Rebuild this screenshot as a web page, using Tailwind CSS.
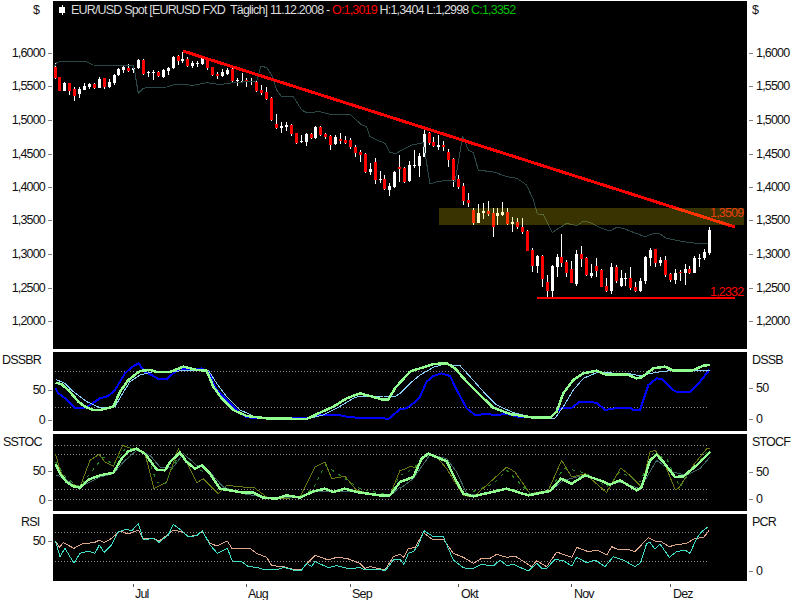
<!DOCTYPE html>
<html lang="de">
<head>
<meta charset="UTF-8">
<title>EUR/USD Spot</title>
<script src="https://cdn.jsdelivr.net/npm/@tailwindcss/browser@4"></script>
</head>
<body class="bg-white w-[800px] h-[600px] overflow-hidden text-[12.5px] leading-[14px] text-[#111] tracking-[-0.82px] font-['Liberation_Sans',Arial,sans-serif]">
<div class="flex flex-col pt-px">

  <!-- main chart -->
  <div class="flex h-[348px] mb-[3px]">
    <div class="relative w-[53px] shrink-0">
      <div class="absolute left-[33px] top-[2px]">$</div>
      <div class="absolute left-0 w-[52px] top-[45px] flex items-center justify-end gap-[3px]"><span>1,6000</span><i class="w-[4px] h-px bg-[#808080]"></i></div>
      <div class="absolute left-0 w-[52px] top-[78px] flex items-center justify-end gap-[3px]"><span>1,5500</span><i class="w-[4px] h-px bg-[#808080]"></i></div>
      <div class="absolute left-0 w-[52px] top-[112px] flex items-center justify-end gap-[3px]"><span>1,5000</span><i class="w-[4px] h-px bg-[#808080]"></i></div>
      <div class="absolute left-0 w-[52px] top-[146px] flex items-center justify-end gap-[3px]"><span>1,4500</span><i class="w-[4px] h-px bg-[#808080]"></i></div>
      <div class="absolute left-0 w-[52px] top-[179px] flex items-center justify-end gap-[3px]"><span>1,4000</span><i class="w-[4px] h-px bg-[#808080]"></i></div>
      <div class="absolute left-0 w-[52px] top-[212px] flex items-center justify-end gap-[3px]"><span>1,3500</span><i class="w-[4px] h-px bg-[#808080]"></i></div>
      <div class="absolute left-0 w-[52px] top-[246px] flex items-center justify-end gap-[3px]"><span>1,3000</span><i class="w-[4px] h-px bg-[#808080]"></i></div>
      <div class="absolute left-0 w-[52px] top-[280px] flex items-center justify-end gap-[3px]"><span>1,2500</span><i class="w-[4px] h-px bg-[#808080]"></i></div>
      <div class="absolute left-0 w-[52px] top-[313px] flex items-center justify-end gap-[3px]"><span>1,2000</span><i class="w-[4px] h-px bg-[#808080]"></i></div>
    </div>
    <div class="relative w-[694px] shrink-0 bg-black">
      <svg id="main" class="block" width="694" height="348" viewBox="53 1 694 348" shape-rendering="crispEdges"></svg>
      <div class="absolute left-[6px] top-[4px] w-[6px] h-[10px] flex justify-center">
        <i class="absolute w-px h-[10px] bg-white"></i>
        <i class="absolute top-[2px] w-[6px] h-[6px] bg-white"></i>
      </div>
      <div class="absolute left-[18px] top-[2px] whitespace-pre text-[#dcdcdc]">EUR/USD Spot [EURUSD FXD  Täglich] 11.12.2008 - <span class="text-[#ff0000]">O:1,3019</span> H:1,3404 L:1,2998 <span class="text-[#00c000]">C:1,3352</span></div>
      <div class="absolute left-[657px] top-[205px] text-[#e8400a]">1,3509</div>
      <div class="absolute left-[657px] top-[284px] text-[#ff0000]">1,2332</div>
    </div>
    <div class="relative w-[53px] shrink-0">
      <div class="absolute left-[5px] top-[2px]">$</div>
      <div class="absolute left-[2px] top-[45px] flex items-center gap-[3px]"><i class="w-[4px] h-px bg-[#808080]"></i><span>1,6000</span></div>
      <div class="absolute left-[2px] top-[78px] flex items-center gap-[3px]"><i class="w-[4px] h-px bg-[#808080]"></i><span>1,5500</span></div>
      <div class="absolute left-[2px] top-[112px] flex items-center gap-[3px]"><i class="w-[4px] h-px bg-[#808080]"></i><span>1,5000</span></div>
      <div class="absolute left-[2px] top-[146px] flex items-center gap-[3px]"><i class="w-[4px] h-px bg-[#808080]"></i><span>1,4500</span></div>
      <div class="absolute left-[2px] top-[179px] flex items-center gap-[3px]"><i class="w-[4px] h-px bg-[#808080]"></i><span>1,4000</span></div>
      <div class="absolute left-[2px] top-[212px] flex items-center gap-[3px]"><i class="w-[4px] h-px bg-[#808080]"></i><span>1,3500</span></div>
      <div class="absolute left-[2px] top-[246px] flex items-center gap-[3px]"><i class="w-[4px] h-px bg-[#808080]"></i><span>1,3000</span></div>
      <div class="absolute left-[2px] top-[280px] flex items-center gap-[3px]"><i class="w-[4px] h-px bg-[#808080]"></i><span>1,2500</span></div>
      <div class="absolute left-[2px] top-[313px] flex items-center gap-[3px]"><i class="w-[4px] h-px bg-[#808080]"></i><span>1,2000</span></div>
    </div>
  </div>

  <!-- DSSBR / DSSB -->
  <div class="flex h-[79px] mb-[3px]">
    <div class="relative w-[53px] shrink-0">
      <div class="absolute left-[2px] top-px">DSSBR</div>
      <div class="absolute left-0 w-[52px] top-[31px] flex items-center justify-end gap-[3px]"><span>50</span><i class="w-[4px] h-px bg-[#808080]"></i></div>
      <div class="absolute left-0 w-[52px] top-[61px] flex items-center justify-end gap-[3px]"><span>0</span><i class="w-[4px] h-px bg-[#808080]"></i></div>
    </div>
    <svg id="dss" class="block shrink-0 bg-black" width="694" height="79" viewBox="53 352 694 79" shape-rendering="crispEdges"></svg>
    <div class="relative w-[53px] shrink-0">
      <div class="absolute left-[5px] top-px">DSSB</div>
      <div class="absolute left-[2px] top-[29px] flex items-center gap-[3px]"><i class="w-[4px] h-px bg-[#808080]"></i><span>50</span></div>
      <div class="absolute left-[2px] top-[60px] flex items-center gap-[3px]"><i class="w-[4px] h-px bg-[#808080]"></i><span>0</span></div>
    </div>
  </div>

  <!-- SSTOC / STOCF -->
  <div class="flex h-[77px] mb-[3px]">
    <div class="relative w-[53px] shrink-0">
      <div class="absolute left-[3px] top-px">SSTOC</div>
      <div class="absolute left-0 w-[52px] top-[30px] flex items-center justify-end gap-[3px]"><span>50</span><i class="w-[4px] h-px bg-[#808080]"></i></div>
      <div class="absolute left-0 w-[52px] top-[59px] flex items-center justify-end gap-[3px]"><span>0</span><i class="w-[4px] h-px bg-[#808080]"></i></div>
    </div>
    <svg id="sto" class="block shrink-0 bg-black" width="694" height="77" viewBox="53 434 694 77" shape-rendering="crispEdges"></svg>
    <div class="relative w-[53px] shrink-0">
      <div class="absolute left-[5px] top-px">STOCF</div>
      <div class="absolute left-[2px] top-[31px] flex items-center gap-[3px]"><i class="w-[4px] h-px bg-[#808080]"></i><span>50</span></div>
      <div class="absolute left-[2px] top-[58px] flex items-center gap-[3px]"><i class="w-[4px] h-px bg-[#808080]"></i><span>0</span></div>
    </div>
  </div>

  <!-- RSI / PCR -->
  <div class="flex h-[67px]">
    <div class="relative w-[53px] shrink-0">
      <div class="absolute left-[21px] top-px">RSI</div>
      <div class="absolute left-0 w-[52px] top-[20px] flex items-center justify-end gap-[3px]"><span>50</span><i class="w-[4px] h-px bg-[#808080]"></i></div>
    </div>
    <svg id="rsi" class="block shrink-0 bg-black" width="694" height="67" viewBox="53 514 694 67" shape-rendering="crispEdges"></svg>
    <div class="relative w-[53px] shrink-0">
      <div class="absolute left-[5px] top-px">PCR</div>
      <div class="absolute left-[2px] top-[50px] flex items-center gap-[3px]"><i class="w-[4px] h-px bg-[#808080]"></i><span>0</span></div>
    </div>
  </div>

  <!-- month axis -->
  <div class="relative h-[19px]">
    <i class="absolute left-[133px] top-[3px] w-px h-[3px] bg-[#555]"></i><span class="absolute left-[135px] top-[6px]">Jul</span>
    <i class="absolute left-[246px] top-[3px] w-px h-[3px] bg-[#555]"></i><span class="absolute left-[248px] top-[6px]">Aug</span>
    <i class="absolute left-[350px] top-[3px] w-px h-[3px] bg-[#555]"></i><span class="absolute left-[352px] top-[6px]">Sep</span>
    <i class="absolute left-[458px] top-[3px] w-px h-[3px] bg-[#555]"></i><span class="absolute left-[461px] top-[6px]">Okt</span>
    <i class="absolute left-[571px] top-[3px] w-px h-[3px] bg-[#555]"></i><span class="absolute left-[574px] top-[6px]">Nov</span>
    <i class="absolute left-[670px] top-[3px] w-px h-[3px] bg-[#555]"></i><span class="absolute left-[673px] top-[6px]">Dez</span>
  </div>
</div>

<script>
// all series were read off at 3x, so they are stored in 3x units and divided here
function xy(ox, oy, arr) { return arr.map(function (p) { return (ox + p[0] / 3) + ',' + (oy + p[1] / 3); }).join(' '); }

function line(svg, pts, color, width, dash) {
  svg.insertAdjacentHTML('beforeend', '<polyline fill="none" points="' + pts + '" stroke="' + color + '" stroke-width="' + (width || 1) +
    '" stroke-linejoin="round"' + (dash ? ' stroke-dasharray="' + dash + '"' : '') + '/>');
}
function dots(svg, y) {
  svg.insertAdjacentHTML('beforeend', '<line x1="55" x2="708" y1="' + y + '" y2="' + y + '" stroke="#909090" stroke-dasharray="1 2"/>');
}
function rect(svg, x, y, w, h, color, extra) {
  svg.insertAdjacentHTML('beforeend', '<rect x="' + x + '" y="' + y + '" width="' + w + '" height="' + h + '" fill="' + color + '" ' + (extra || '') + '/>');
}

// x, wick top, wick bottom, body top, body bottom, red
var c1 = [[166,190,238,202,234,1],[179,230,272,232,272,1],[193,245,274,248,272,0],[208,248,285,250,272,1],[223,262,302,268,288,1],[238,260,295,268,282,0],[253,250,270,258,270,0],[268,250,268,253,260,0],[283,250,267,252,263,1],[298,230,265,238,263,0],[313,235,268,235,260,1],[328,238,265,246,262,0],[343,222,254,224,249,0],[356,205,228,208,226,0],[370,198,218,202,210,0],[385,193,217,203,213,1],[400,195,218,203,210,0],[415,178,207,180,205,0],[430,178,224,179,222,1],[445,212,232,216,219,0],[460,210,240,215,220,0],[475,212,232,215,228,1],[490,208,233,210,230,0],[505,200,225,205,213,0],[520,168,208,170,205,0],[535,165,195,167,183,1],[548,155,188,177,182,0],[563,170,202,178,198,1],[577,182,205,189,197,0],[592,183,200,188,191,0],[607,170,195,174,192,0],[622,172,210,176,205,1],[637,200,228,202,226,1],[652,216,236,222,228,1],[667,208,232,217,228,0],[682,205,225,209,222,0],[697,205,250,208,243,1],[712,235,258,241,244,0],[727,218,250,242,246,0],[740,235,262,240,246,1],[755,235,255,244,246,0],[770,240,275,245,273,1],[785,255,285,270,280,1],[800,262,300,275,298,1],[815,292,362,293,360,1],[830,342,388,372,384,1],[845,365,398,378,383,0],[860,366,392,375,380,0],[875,372,408,376,403,1],[890,398,432,400,428,1],[905,405,428,423,426,0],[920,400,438,402,426,0],[933,398,418,402,414,1],[947,378,416,380,414,0],[962,378,408,380,404,1],[977,398,418,402,410,1],[992,406,450,408,435,1],[1007,405,436,410,433,0],[1022,400,432,418,424,1],[1037,408,432,420,430,1],[1052,415,446,420,442,1],[1067,436,470,440,458,1],[1082,450,485,456,464,1],[1097,460,520,462,516,1],[1111,490,525,506,516,0],[1125,475,552,486,540,1],[1140,512,550,538,540,0],[1153,525,570,538,568,1],[1168,550,588,557,570,0],[1183,512,565,515,562,0],[1198,465,545,502,506,1]];
var c2 = [[13,500,548,505,545,1],[28,483,546,495,543,0],[43,450,505,496,498,0],[58,460,530,468,498,0],[73,388,472,402,470,0],[88,395,436,398,428,1],[100,410,440,426,438,1],[115,405,450,436,440,0],[130,422,452,436,440,1],[145,447,500,456,480,1],[160,475,560,477,540,1],[175,525,566,538,560,1]];
var c3 = [[190,10,75,17,62,1],[205,40,82,60,68,1],[220,85,135,90,128,1],[235,72,130,98,128,0],[250,68,118,93,98,0],[265,62,107,93,103,1],[280,85,170,98,142,1],[293,85,135,100,108,0],[308,66,108,96,104,0],[322,85,135,96,132,1],[337,112,155,127,131,0],[352,115,148,126,142,1],[367,115,162,141,155,1],[382,150,214,152,212,1],[397,205,276,210,258,1],[412,225,278,228,258,0],[427,225,320,228,298,1],[442,284,350,306,332,1],[457,255,350,257,332,0],[472,222,290,230,260,0],[485,162,262,232,248,1],[499,240,290,245,278,1],[514,242,310,268,308,1],[529,210,318,222,312,0],[544,198,262,222,236,1],[559,232,288,234,286,1],[574,252,295,280,288,0],[589,235,290,258,272,1],[604,268,322,270,320,1],[619,295,336,318,332,1],[634,250,342,262,332,0],[649,256,308,262,302,1],[664,270,320,295,318,0],[676,280,318,294,296,0],[691,260,330,294,324,1],[706,305,336,322,332,1],[721,295,336,303,332,0],[736,228,312,230,302,0],[751,205,258,210,234,0],[766,206,260,208,248,1],[781,230,258,240,248,0],[796,228,290,240,285,1],[811,278,305,282,300,1],[826,268,312,278,300,0],[841,270,304,276,280,1],[856,252,315,267,280,0],[868,258,282,267,278,1],[883,228,280,233,278,0],[898,222,262,234,237,0],[913,207,240,215,235,0],[928,142,225,150,220,0]];

var main = document.getElementById('main');
function candles(list, ox, oy) {
  list.forEach(function (c) {
    var x = Math.floor(ox + c[0] / 3), hi = oy + c[1] / 3, lo = oy + c[2] / 3, top = oy + c[3] / 3, bot = oy + c[4] / 3;
    rect(main, x, hi, 1, lo - hi, '#ffffff');
    rect(main, x - 1, top, 3, Math.max(bot - top, 1), c[5] ? '#ff0000' : '#ffffff');
  });
}
candles(c1, 0, 0); candles(c2, 400, 0); candles(c3, 400, 180);

line(main, xy(0, 0, [[163,200],[170,188],[185,184],[258,184],[280,195],[400,197],[405,220],[415,280],[430,265],[450,262],[500,261],[530,252],[580,256],[620,248],[660,254],[700,248],[770,243],[783,198],[800,203],[815,225],[830,270],[845,290],[880,290],[905,330],[920,338],[960,335],[990,343],[1050,343],[1085,375],[1100,380],[1110,410],[1130,420],[1155,430],[1170,458],[1190,460]]) + ' ' +
  xy(400, 0, [[0,453],[35,435],[70,428],[90,552],[110,545],[150,540],[165,545],[188,408],[205,450],[220,458],[235,510],[285,517],[320,530],[350,535],[380,555],[400,600],[412,642],[430,643],[457,697],[500,670],[530,677],[550,664],[570,667],[600,683],[630,693],[650,682],[670,685],[700,697],[735,710],[760,700],[780,702],[800,715],[850,725],[890,730],[925,732]]), '#2a4646');
line(main, '183,51 735,227', '#ff0000', 3);
line(main, '537,298 735,298', '#ff0000', 2);
rect(main, 439, 208, 305, 17, '#ffe600', 'fill-opacity="0.22"');

var dss = document.getElementById('dss');
dots(dss, 371); dots(dss, 407);
line(dss, xy(0, 340, [[167,145],[175,160],[195,175],[225,205],[250,205],[270,195],[300,175],[325,168],[345,150],[375,100],[395,82],[415,70],[435,95],[455,105],[475,117],[500,117],[520,100],[540,85],[575,90],[605,85],[625,95],[650,150],[680,180],[710,210],[740,232],[800,235],[860,235],[920,235],[950,225],[980,225],[1020,226],[1040,230],[1070,233],[1135,233],[1165,237],[1180,225]]) + ' ' +
  xy(400, 340, [[0,207],[20,205],[40,190],[60,170],[80,125],[100,108],[125,100],[150,108],[170,150],[200,205],[225,225],[260,222],[285,225],[320,222],[360,232],[450,233],[475,210],[490,203],[515,203],[540,185],[590,188],[615,210],[650,204],[690,203],[700,210],[720,210],[745,135],[770,115],[785,117],[820,150],[830,156],[870,156],[900,125],[928,90]]), '#0000ff', 2);
line(dss, xy(0, 340, [[167,118],[195,130],[220,155],[260,185],[300,203],[345,200],[365,165],[390,125],[420,105],[460,95],[520,95],[560,90],[625,90],[650,130],[680,170],[720,210],[760,228],[800,233],[920,237],[970,225],[1010,205],[1060,175],[1080,168],[1150,168],[1185,170]]) + ' ' +
  xy(400, 340, [[0,160],[30,130],[60,105],[100,82],[130,73],[180,77],[210,110],[250,155],[290,195],[340,218],[400,232],[465,235],[490,200],[520,150],[550,115],[590,98],[680,100],[720,107],[770,97],[800,93],[870,92],[930,90]]), '#87cefa');
line(dss, xy(0, 340, [[167,128],[185,133],[205,150],[235,185],[255,200],[280,210],[300,210],[340,200],[360,155],[385,120],[420,93],[450,90],[470,96],[510,96],[550,80],[590,90],[620,92],[640,140],[665,175],[700,210],[740,228],[800,235],[920,237],[960,218],[1000,200],[1040,175],[1080,160],[1110,168],[1145,178],[1165,178],[1185,145]]) + ' ' +
  xy(400, 340, [[0,128],[30,95],[60,85],[100,72],[140,70],[165,85],[200,125],[240,165],[280,203],[330,222],[400,233],[450,233],[470,215],[490,160],[520,120],[550,100],[590,92],[615,103],[680,103],[710,115],[725,112],[760,85],[795,80],[820,92],[875,92],[910,77],[930,75]]), '#90ff90', 2.5);

var sto = document.getElementById('sto');
dots(sto, 445); dots(sto, 454); dots(sto, 489); dots(sto, 499);
line(sto, xy(50, 432, [[17,67],[30,115],[50,150],[90,165],[120,85],[147,67],[165,90],[190,103],[218,40],[260,55],[285,65],[312,170],[350,150],[385,50],[410,90],[440,152],[460,140],[505,185],[530,160],[580,165],[610,165],[650,195],[700,200],[750,195],[795,105],[825,90],[845,140],[885,133],[920,175],[990,190],[1020,190],[1050,115]]) + ' ' +
  xy(400, 432, [[0,117],[35,102],[45,108],[80,65],[110,75],[140,110],[190,190],[220,195],[265,155],[320,105],[345,120],[390,185],[445,175],[485,85],[515,135],[555,125],[620,182],[662,108],[690,130],[725,165],[750,60],[765,55],[790,85],[825,172],[835,170],[880,100],[920,50],[930,48]]), '#6b7a10');
line(sto, xy(50, 432, [[17,90],[50,140],[90,165],[120,125],[160,75],[190,100],[230,45],[290,65],[320,150],[345,155],[390,60],[440,115],[480,120],[510,170],[640,195],[700,195],[750,195],[790,170],[825,100],[870,130],[930,170],[1020,190],[1050,130]]) + ' ' +
  xy(400, 432, [[0,130],[40,110],[80,65],[140,90],[190,190],[280,155],[320,115],[390,185],[450,175],[490,110],[525,115],[560,125],[620,165],[660,120],[720,150],[760,65],[800,80],[840,165],[870,120],[925,55]]), '#1f8a1f', 1, '3 5');
line(sto, xy(50, 432, [[17,130],[40,135],[70,160],[90,165],[150,135],[190,125],[220,90],[260,55],[300,70],[330,105],[370,105],[400,65],[440,100],[470,110],[520,165],[580,185],[640,195],[700,195],[750,197],[800,178],[850,178],[920,180],[1020,192],[1050,165]]) + ' ' +
  xy(400, 432, [[0,170],[40,140],[90,68],[140,80],[170,120],[200,185],[230,190],[320,172],[385,190],[450,178],[490,145],[550,130],[620,155],[660,150],[720,170],[770,85],[820,120],[860,130],[900,110],[930,75]]), '#3f6464');
line(sto, xy(50, 432, [[17,97],[30,125],[50,150],[70,163],[90,167],[115,143],[150,130],[190,122],[215,80],[235,58],[260,50],[285,65],[320,113],[345,115],[360,90],[390,62],[410,90],[435,110],[455,100],[480,125],[510,170],[540,175],[580,182],[610,182],[640,197],[680,200],[710,190],[750,197],[790,178],[825,170],[850,180],[885,170],[920,180],[990,190],[1020,190],[1050,150]]) + ' ' +
  xy(400, 432, [[0,150],[40,135],[65,80],[85,65],[140,88],[165,140],[190,185],[220,193],[320,170],[385,190],[450,177],[483,140],[515,155],[555,130],[600,145],[630,158],[660,145],[710,175],[725,165],[750,85],[770,68],[790,90],[825,135],[850,133],[890,100],[930,60]]), '#90ff90', 2.5);

var rsi = document.getElementById('rsi');
dots(rsi, 532); dots(rsi, 561);
line(rsi, xy(0, 470, [[166,212],[178,232],[190,218],[222,235],[245,222],[285,217],[298,210],[312,218],[335,205],[360,183],[385,192],[415,180],[430,207],[460,205],[477,213],[505,193],[520,180],[550,187],[565,200],[590,195],[607,185],[630,220],[652,228],[682,213],[697,237],[750,235],[770,250],[800,262],[815,287],[850,290],[885,300],[905,298],[945,256],[985,270],[1010,262],[1040,265],[1080,280],[1095,295],[1110,290],[1155,300],[1180,260]]) + ' ' +
  xy(400, 470, [[0,253],[12,262],[25,235],[45,233],[70,188],[95,207],[130,207],[160,250],[190,262],[220,280],[245,265],[270,265],[290,253],[320,262],[345,258],[395,290],[410,272],[440,290],[470,246],[515,262],[530,232],[565,245],[590,240],[620,255],[635,230],[650,237],[680,237],[705,245],[745,203],[765,213],[780,213],[808,230],[825,225],[860,220],[885,205],[910,203],[927,182]]), '#dcaa8a');
line(rsi, xy(0, 470, [[166,212],[180,260],[195,235],[222,280],[240,250],[265,243],[285,250],[298,225],[312,247],[335,225],[355,185],[380,178],[395,183],[415,160],[430,210],[460,205],[477,217],[505,195],[520,163],[540,178],[565,200],[590,197],[607,182],[630,225],[652,250],[682,235],[697,273],[725,275],[745,290],[770,292],[790,298],[830,300],[850,292],[880,300],[905,300],[920,280],[935,290],[945,275],[985,293],[1010,287],[1050,297],[1080,292],[1095,300],[1140,298],[1155,303],[1180,270]]) + ' ' +
  xy(400, 470, [[0,268],[12,283],[25,250],[40,245],[55,225],[72,182],[100,200],[130,200],[160,270],[190,293],[215,297],[245,283],[280,288],[300,270],[320,287],[340,283],[385,303],[410,280],[425,295],[440,295],[465,268],[490,272],[515,288],[530,262],[560,278],[585,270],[615,290],[640,260],[670,270],[705,290],[722,278],[740,220],[750,218],[765,237],[780,222],[808,262],[830,245],[855,240],[870,250],[890,205],[905,185],[925,170]]), '#40e0c8');
</script>
</body>
</html>
